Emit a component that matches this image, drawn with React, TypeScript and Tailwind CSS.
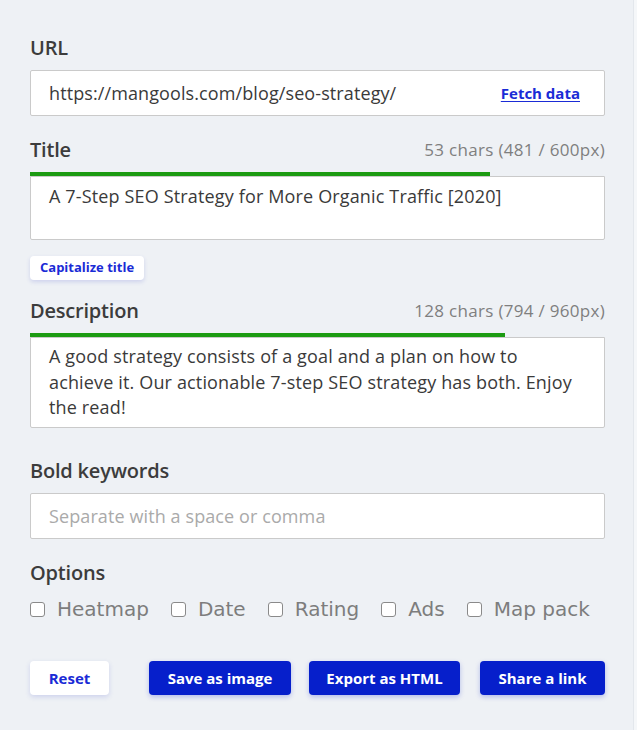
import React from "react";

const sans = { fontFamily: '"Open Sans", "Noto Sans", sans-serif' };

function Label({ children }: { children: React.ReactNode }) {
  return (
    <div className="text-[20px] leading-[24px] font-semibold text-[#3c3c3c] tracking-[-0.2px]">{children}</div>
  );
}

function Counter({ children }: { children: React.ReactNode }) {
  return <div className="text-[17px] leading-[24px] text-[#7f7f7f] tracking-[0.3px]">{children}</div>;
}

function Check({ label }: { label: string }) {
  return (
    <label className="flex items-center gap-[12px]">
      <span className="w-[15px] h-[15px] border border-[#8a8a8a] rounded-[3px] bg-white" />
      <span
        className="text-[20px] leading-[24px] text-[#7d7d7d] font-medium"
        style={{ fontFamily: '"DejaVu Sans", sans-serif' }}
      >
        {label}
      </span>
    </label>
  );
}

export default function App() {
  return (
    <div className="w-[637px] h-[730px] bg-[#eef1f5] flex" style={sans}>
      <div className="flex-1 pl-[30px] pr-[28px] pt-[36px]">
        <Label>URL</Label>
        <div className="mt-[10px] h-[46px] bg-white border border-[#cacaca] rounded-[2px] flex items-center justify-between pl-[18px] pr-[24px]">
          <span className="text-[18px] text-[#3a3a3a] tracking-[0.1px]">https://mangools.com/blog/seo-strategy/</span>
          <span className="text-[15px] font-bold text-[#1a2bd6] underline underline-offset-2">Fetch data</span>
        </div>

        <div className="mt-[22px] flex justify-between items-end">
          <Label>Title</Label>
          <Counter>53 chars (481 / 600px)</Counter>
        </div>
        <div className="mt-[10px] h-[4px] bg-[#1c9b12]" style={{ width: "80%" }} />
        <div className="h-[64px] bg-white border border-[#cacaca] rounded-b-[2px] pl-[18px] pr-[18px] pt-[7px]">
          <div className="text-[18px] leading-[25px] text-[#3a3a3a] tracking-[0.15px]">
            A 7-Step SEO Strategy for More Organic Traffic [2020]
          </div>
        </div>

        <button className="mt-[16px] h-[24px] px-[10px] bg-white rounded-[4px] shadow-[0_2px_4px_rgba(60,70,200,0.18)] text-[13px] font-bold text-[#1a2bd6]">
          Capitalize title
        </button>

        <div className="mt-[19px] flex justify-between items-end">
          <Label>Description</Label>
          <Counter>128 chars (794 / 960px)</Counter>
        </div>
        <div className="mt-[10px] h-[4px] bg-[#1c9b12]" style={{ width: "82.6%" }} />
        <div className="h-[91px] bg-white border border-[#cacaca] rounded-b-[2px] pl-[18px] pr-[18px] pt-[6px]">
          <div className="text-[18px] leading-[25.5px] text-[#3a3a3a] tracking-[0.15px] whitespace-nowrap">
            A good strategy consists of a goal and a plan on how to
            <br />
            achieve it. Our actionable 7-step SEO strategy has both. Enjoy
            <br />
            the read!
          </div>
        </div>

        <div className="mt-[31px]">
          <Label>Bold keywords</Label>
        </div>
        <div className="mt-[10px] h-[46px] bg-white border border-[#cacaca] rounded-[2px] flex items-center pl-[18px]">
          <span className="text-[18px] text-[#aaaaaa] tracking-[0.1px]">Separate with a space or comma</span>
        </div>

        <div className="mt-[22px]">
          <Label>Options</Label>
        </div>
        <div className="mt-[12px] flex items-center gap-[22px]">
          <Check label="Heatmap" />
          <Check label="Date" />
          <Check label="Rating" />
          <Check label="Ads" />
          <Check label="Map pack" />
        </div>

        <div className="mt-[40px] flex justify-between">
          <button className="h-[34px] w-[79px] bg-white rounded-[4px] shadow-[0_2px_5px_rgba(60,70,200,0.18)] text-[15px] font-bold text-[#1a2bd6]">
            Reset
          </button>
          <div className="flex gap-[18px]">
            <button className="h-[34px] w-[142px] bg-[#061fcb] rounded-[4px] shadow-[0_2px_5px_rgba(6,31,203,0.25)] text-[15px] font-bold text-white">
              Save as image
            </button>
            <button className="h-[34px] w-[151px] bg-[#061fcb] rounded-[4px] shadow-[0_2px_5px_rgba(6,31,203,0.25)] text-[15px] font-bold text-white">
              Export as HTML
            </button>
            <button className="h-[34px] w-[125px] ml-[2px] bg-[#061fcb] rounded-[4px] shadow-[0_2px_5px_rgba(6,31,203,0.25)] text-[15px] font-bold text-white">
              Share a link
            </button>
          </div>
        </div>
      </div>
      <div className="w-[4px] h-full bg-[#f5f7f9] border-l border-[#e3e7ec]" />
    </div>
  );
}
